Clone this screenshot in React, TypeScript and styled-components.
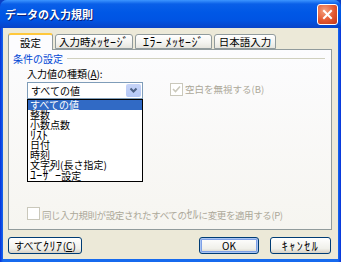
import styled, {createGlobalStyle} from "styled-components";

const GlobalStyle = createGlobalStyle`
    html, body {
        margin: 0;
        padding: 0;
        background: #0a3fc4;
    }
    * {
        box-sizing: border-box;
    }
`

const font = `"Noto Sans CJK JP", "Liberation Sans", sans-serif`

const SWindow = styled.div`
    width: 341px;
    height: 262px;
    display: flex;
    flex-direction: column;
    background: linear-gradient(90deg, #0831d9 0, #166aee 3px, #166aee calc(100% - 3px), #0831d9 100%);
    border-radius: 7px 7px 0 0;
    overflow: hidden;
    font-family: ${font};
    font-size: 10px;
`

const STitleBar = styled.div`
    height: 28px;
    flex-shrink: 0;
    display: flex;
    align-items: center;
    justify-content: space-between;
    padding: 0 3px 0 5px;
    background: linear-gradient(180deg, #3d95ff 0, #0a5fe8 4px, #0058e6 12px, #0054e3 20px, #0843c8 28px);
`

const STitle = styled.div`
    color: #fff;
    font-size: 11px;
    font-weight: bold;
    text-shadow: 1px 1px 0 #0a1f7a;
`

const SClose = styled.div`
    width: 21px;
    height: 21px;
    border: 1px solid #fff;
    border-radius: 3px;
    background: radial-gradient(circle at 35% 30%, #f5a17f 0, #e3572f 55%, #c2361a 100%);
    display: flex;
    align-items: center;
    justify-content: center;
`

const SBody = styled.div`
    flex: 1;
    margin: 0 3px 3px;
    background: #ece9d8;
    display: flex;
    flex-direction: column;
    padding: 5px 5px 0 5px;
`

const STabs = styled.div`
    display: flex;
    align-items: flex-end;
    height: 16px;
    position: relative;
    z-index: 1;
`

const STab = styled.div<{ $active?: boolean; $width: number }>`
    width: ${({$width}) => $width}px;
    height: ${({$active}) => $active ? '17px' : '15px'};
    margin-right: 2px;
    border: 1px solid #919b9c;
    border-bottom: ${({$active}) => $active ? 'none' : '1px solid #919b9c'};
    border-top: ${({$active}) => $active ? '2px solid #ffc83c' : '1px solid #919b9c'};
    border-radius: 3px 3px 0 0;
    background: ${({$active}) => $active ? '#fcfcfe' : 'linear-gradient(180deg, #fff 0, #f3f3ef 60%, #e6e5de 100%)'};
    font-size: 10.5px;
    line-height: 13px;
    color: #000;
    display: flex;
    align-items: center;
    justify-content: center;
    white-space: nowrap;
    margin-bottom: ${({$active}) => $active ? '-1px' : '0'};
`

const SKana = styled.span<{ $spacing?: number }>`
    font-size: 12px;
    letter-spacing: ${({$spacing}) => $spacing ?? 0.5}px;
`

const SPanel = styled.div`
    height: 181px;
    border: 1px solid #919b9c;
    background: linear-gradient(180deg, #fcfcfe 0, #f6f5f0 100%);
    margin-right: 1px;
    padding: 2px 6px 0 4px;
    display: flex;
    flex-direction: column;
`

const SGroupHead = styled.div`
    display: flex;
    align-items: center;
    gap: 4px;
    color: #0046d5;
    line-height: 13px;

    &::after {
        content: '';
        flex: 1;
        height: 1px;
        background: #d0d0bf;
    }
`

const SRow = styled.div`
    display: flex;
    padding-left: 14px;
    gap: 27px;
`

const SColumn = styled.div<{ $top?: number }>`
    display: flex;
    flex-direction: column;
    padding-top: ${({$top}) => $top ?? 0}px;
`

const SLabel = styled.div`
    line-height: 13px;
    margin-top: 2px;
    margin-bottom: 2px;
`

const SSelect = styled.div`
    width: 116px;
    height: 17px;
    border: 1px solid #7f9db9;
    background: #fff;
    display: flex;
    align-items: center;
    justify-content: space-between;
    padding: 0 1px 0 3px;
`

const SArrow = styled.div`
    width: 15px;
    height: 13px;
    background: linear-gradient(180deg, #c6d3f7 0, #b4c8f6 100%);
    border-radius: 2px;
    display: flex;
    align-items: center;
    justify-content: center;
`

const SList = styled.div`
    width: 116px;
    border: 1px solid #000;
    background: #fff;
    padding-bottom: 1px;
`

const SItem = styled.div<{ $selected?: boolean }>`
    height: 10px;
    line-height: 10px;
    padding-left: 2px;
    color: ${({$selected}) => $selected ? '#fff' : '#000'};
    background: ${({$selected}) => $selected ? '#316ac5' : 'transparent'};
    white-space: nowrap;
`

const SCheck = styled.div<{ $indent?: number; $bottom?: number }>`
    display: flex;
    align-items: center;
    gap: 2px;
    color: #aca899;
    font-size: 9.5px;
    white-space: nowrap;
    padding-left: ${({$indent}) => $indent ?? 0}px;
    margin-bottom: ${({$bottom}) => $bottom ?? 0}px;
`

const SCheckText = styled.span<{ $tight?: boolean }>`
    letter-spacing: ${({$tight}) => $tight ? '-0.4px' : '0'};
`

const SBox = styled.div`
    flex-shrink: 0;
    width: 13px;
    height: 13px;
    border: 1px solid #cac8bb;
    background: #fff;
    display: flex;
    align-items: center;
    justify-content: center;
`

const SSpacer = styled.div`
    flex: 1;
`

const SFooter = styled.div`
    display: flex;
    align-items: center;
    padding: 7px 2px 0 0;
`

const SButton = styled.div<{ $default?: boolean; $width: number; $gap?: number }>`
    width: ${({$width}) => $width}px;
    height: 17px;
    border: 1px solid #003c74;
    border-radius: 3px;
    background: linear-gradient(180deg, #fff 0, #f0f0ea 70%, #d6d0c5 100%);
    box-shadow: ${({$default}) => $default ? 'inset 0 0 0 1px #a9c4f3, inset 0 0 0 2px #7ea0e6' : 'none'};
    display: flex;
    align-items: center;
    justify-content: center;
    white-space: nowrap;
    margin-left: ${({$gap}) => $gap ?? 0}px;
`

const items = [
    <>すべての値</>,
    <>整数</>,
    <>小数点数</>,
    <SKana $spacing={0}>ﾘｽﾄ</SKana>,
    <>日付</>,
    <>時刻</>,
    <>文字列(長さ指定)</>,
    <><SKana $spacing={0.3}>ﾕｰｻﾞｰ</SKana>設定</>,
]

export default function App() {
    return (<>
        <GlobalStyle/>
        <SWindow>
            <STitleBar>
                <STitle>データの入力規則</STitle>
                <SClose>
                    <svg width="11" height="11" viewBox="0 0 11 11">
                        <path d="M2 2 L9 9 M9 2 L2 9" stroke="#fff" strokeWidth="2" strokeLinecap="square"/>
                    </svg>
                </SClose>
            </STitleBar>
            <SBody>
                <STabs>
                    <STab $active $width={45}>設定</STab>
                    <STab $width={78}>入力時<SKana>ﾒｯｾｰｼﾞ</SKana></STab>
                    <STab $width={77}><SKana>ｴﾗｰ ﾒｯｾｰｼﾞ</SKana></STab>
                    <STab $width={62}>日本語入力</STab>
                </STabs>
                <SPanel>
                    <SGroupHead>条件の設定</SGroupHead>
                    <SRow>
                        <SColumn>
                            <SLabel>入力値の種類(<u>A</u>):</SLabel>
                            <SSelect>
                                すべての値
                                <SArrow>
                                    <svg width="9" height="7" viewBox="0 0 9 7">
                                        <path d="M1.5 1.5 L4.5 4.5 L7.5 1.5" stroke="#4d6185" strokeWidth="2" fill="none"/>
                                    </svg>
                                </SArrow>
                            </SSelect>
                            <SList>
                                {items.map((item, i) => <SItem key={i} $selected={i === 0}>{item}</SItem>)}
                            </SList>
                        </SColumn>
                        <SColumn $top={17}>
                            <SCheck>
                                <SBox>
                                    <svg width="9" height="9" viewBox="0 0 9 9">
                                        <path d="M1 4 L3.5 6.5 L8 1.5" stroke="#cac8bb" strokeWidth="1.6" fill="none"/>
                                    </svg>
                                </SBox>
                                <SCheckText>空白を無視する(B)</SCheckText>
                            </SCheck>
                        </SColumn>
                    </SRow>
                    <SSpacer/>
                    <SCheck $indent={14} $bottom={7}>
                        <SBox/>
                        <SCheckText $tight>同じ入力規則が設定されたすべての<SKana $spacing={0}>ｾﾙ</SKana>に変更を適用する(P)</SCheckText>
                    </SCheck>
                </SPanel>
                <SFooter>
                    <SButton $width={74}>すべて<SKana $spacing={0.5}>ｸﾘｱ</SKana>(<u>C</u>)</SButton>
                    <SSpacer/>
                    <SButton $width={60} $default>OK</SButton>
                    <SButton $width={61} $gap={11}><SKana $spacing={1.5}>ｷｬﾝｾﾙ</SKana></SButton>
                </SFooter>
            </SBody>
        </SWindow>
    </>)
}
